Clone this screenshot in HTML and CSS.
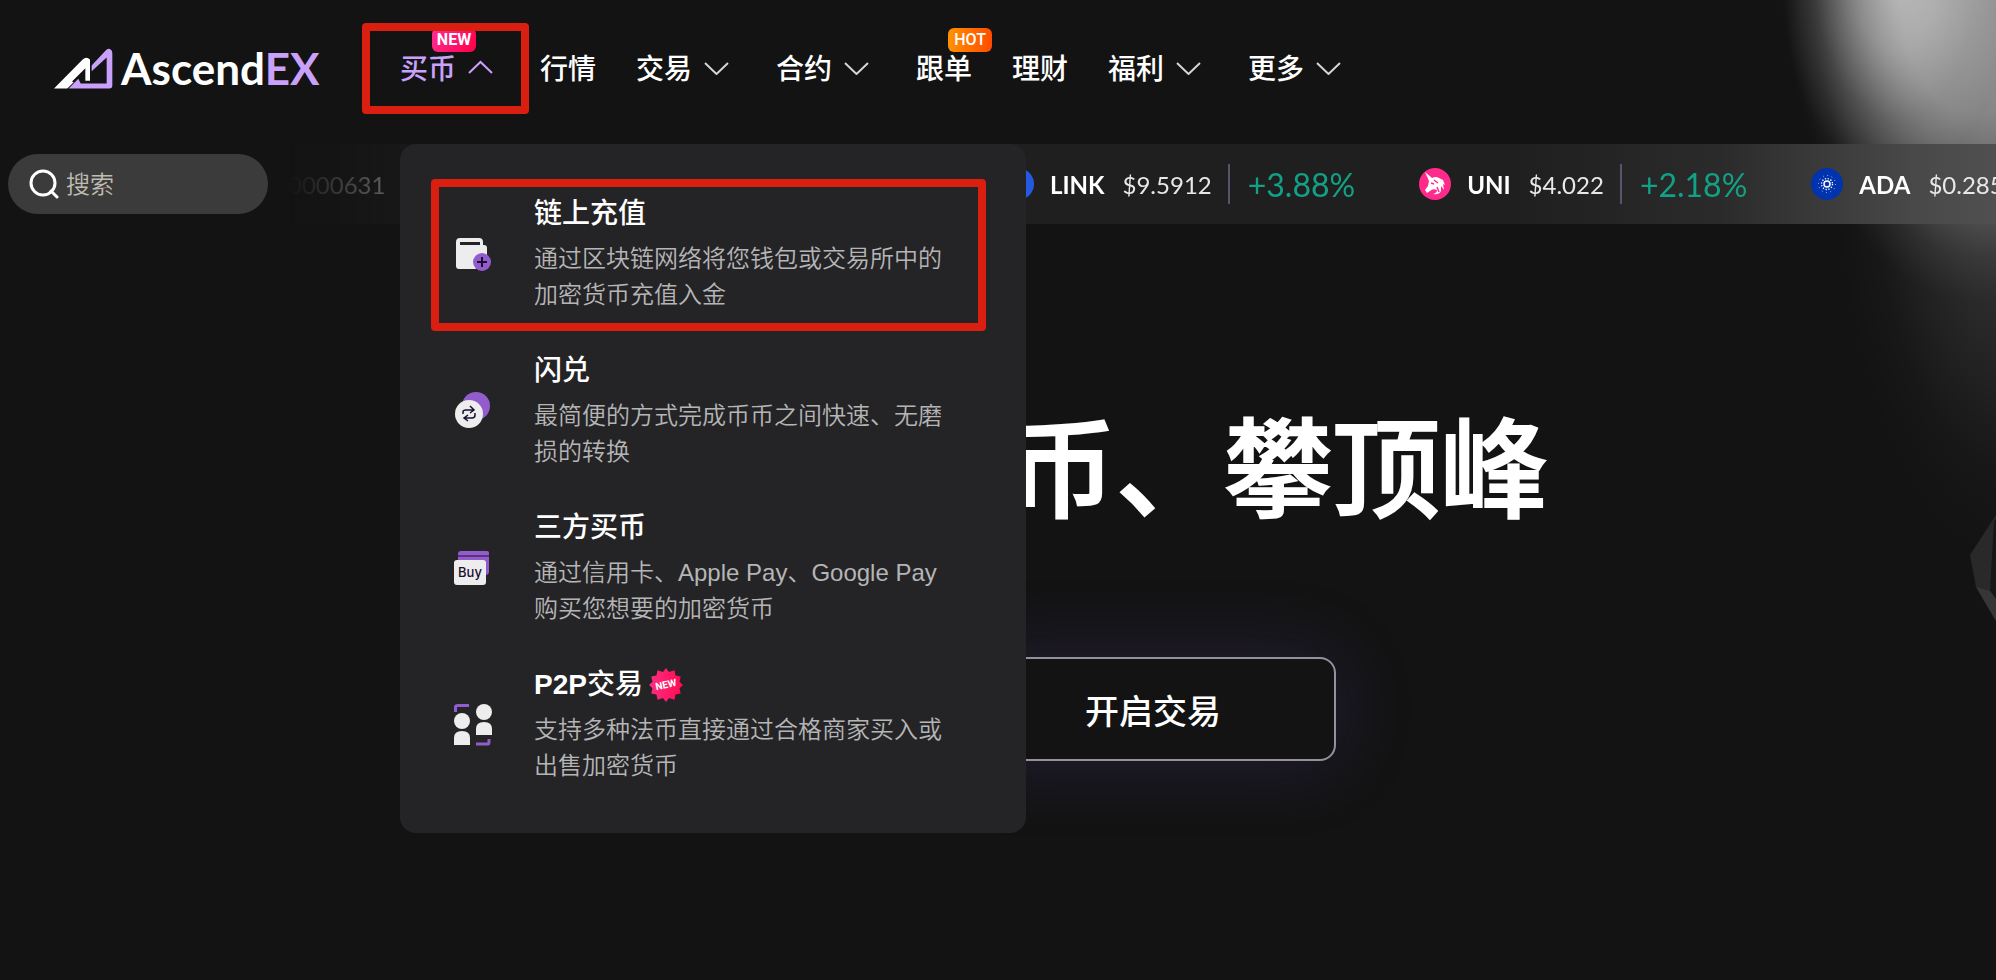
FILE: index.html
```html
<!DOCTYPE html>
<html lang="zh-CN">
    <head>
        <title>AscendEX</title>
        <meta charset="utf-8" />
        <meta name="viewport" content="width=device-width, initial-scale=1">
        <link rel="stylesheet" href="styles.css">
    </head>
    <body>
        <header class="header">
            <a class="logo" href="#">
                <svg class="logo-mark" viewBox="44 52 177 122" aria-hidden="true">
                    <path fill="#fff" d="M44 173 L130 86 Q141 76 152 86 V150 H138 V112 L98 152 L103 154 L84 173 Z"/>
                    <path fill="#c9a0fa" d="M88 173 L117 144 L124 158 H202 V80 L157 121 V104 L199 59 Q206 51 214 56 Q219 59 219 67 V164 Q219 173 210 173 Z"/>
                </svg>
                <span class="logo-text">Ascend<b>EX</b></span>
            </a>
            <nav class="nav">
                <div class="nav-item">
                    <a class="active" href="#">买币<svg class="arrow" viewBox="0 0 32 16"><path d="M1 14 L12.500 3 L24 14"/></svg></a>
                    <span class="tag tag-new">NEW</span>
                    <span class="mark mark-nav"></span>
                    <div class="menu">
                        <a class="menu-item" href="#">
                            <svg class="menu-icon" viewBox="0 0 40 48">
                                <path fill="#ededed" d="M8 8 H27 Q31 8 31 12 V15 H32 Q35 15 35 18 V39 H7 Q4 39 4 36 V12 Q4 8 8 8 Z"/>
                                <rect x="8" y="12" width="20" height="3" fill="#242426"/>
                                <circle cx="30" cy="32" r="9" fill="#935ccc"/>
                                <path d="M30 27 V37 M25 32 H35" stroke="#1a0f30" stroke-width="2"/>
                            </svg>
                            <span class="menu-text">
                                <strong>链上充值</strong>
                                <span>通过区块链网络将您钱包或交易所中的加密货币充值入金</span>
                            </span>
                            <span class="mark mark-menu"></span>
                        </a>
                        <a class="menu-item" href="#">
                            <svg class="menu-icon" viewBox="0 0 40 48">
                                <circle cx="24" cy="19" r="14" fill="#935ccc"/>
                                <circle cx="17" cy="27" r="14" fill="#ededed"/>
                                <path d="M11 27 V25 Q11 23 14 23 H22 M18 19 L22 23 L18 26 M23 26 V28 Q23 31 20 31 H12 M16 28 L12 31 L16 34" fill="none" stroke="#1a0f30" stroke-width="1.500"/>
                            </svg>
                            <span class="menu-text">
                                <strong>闪兑</strong>
                                <span>最简便的方式完成币币之间快速、无磨损的转换</span>
                            </span>
                        </a>
                        <a class="menu-item" href="#">
                            <svg class="menu-icon" viewBox="0 0 40 48">
                                <path fill="#935ccc" d="M9 7 H35 Q37 7 37 9 V28 Q37 31 33 31 H6 V10 Q6 7 9 7 Z"/>
                                <path d="M6 12 H38" stroke="#1a0f30" stroke-width="1"/>
                                <rect x="2" y="16" width="32" height="25" rx="3" fill="#ededed"/>
                                <text class="buy" x="18" y="33">Buy</text>
                            </svg>
                            <span class="menu-text">
                                <strong>三方买币</strong>
                                <span>通过信用卡、Apple Pay、Google Pay购买您想要的加密货币</span>
                            </span>
                        </a>
                        <a class="menu-item" href="#">
                            <svg class="menu-icon" viewBox="0 0 40 48">
                                <path d="M3.500 11 V6 Q3.500 4.500 6 4.500 H17 M24 43 H36 Q37 43 37 41 V38" fill="none" stroke="#935ccc" stroke-width="3"/>
                                <circle cx="10" cy="20" r="8" fill="#ededed"/>
                                <path fill="#ededed" d="M2 44 V37 Q2 30 10 30 Q18 30 18 37 V44 Z"/>
                                <circle cx="32" cy="11" r="8" fill="#ededed"/>
                                <path fill="#ededed" d="M24 34 V28 Q24 21 32 21 Q40 21 40 28 V34 Z"/>
                            </svg>
                            <span class="menu-text">
                                <strong>
                                    <span><b>P2P</b>交易</span>
                                    <svg class="burst" viewBox="0 0 34 34">
                                        <defs><linearGradient id="pink"><stop offset="0" stop-color="#ff2e83"/><stop offset="1" stop-color="#ff0a52"/></linearGradient></defs>
                                        <path fill="url(#pink)" d="M17 0 L20 4 L25.500 2.300 L26.500 7.500 L31.700 8.500 L30.500 13.800 L34 17 L30.500 20.200 L31.700 25.500 L26.500 26.500 L25.500 31.700 L20 30 L17 34 L14 30 L8.500 31.700 L7.500 26.500 L2.300 25.500 L3.500 20.200 L0 17 L3.500 13.800 L2.300 8.500 L7.500 7.500 L8.500 2.300 L14 4 Z"/>
                                        <text x="17" y="20" transform="rotate(-12 17 17)">NEW</text>
                                    </svg>
                                </strong>
                                <span>支持多种法币直接通过合格商家买入或出售加密货币</span>
                            </span>
                        </a>
                    </div>
                </div>
                <div class="nav-item"><a href="#">行情</a></div>
                <div class="nav-item"><a href="#">交易<svg class="arrow" viewBox="0 0 32 16"><path d="M1 4 L12.500 15 L24 4"/></svg></a></div>
                <div class="nav-item"><a href="#">合约<svg class="arrow" viewBox="0 0 32 16"><path d="M1 4 L12.500 15 L24 4"/></svg></a></div>
                <div class="nav-item"><a href="#">跟单</a><span class="tag tag-hot">HOT</span></div>
                <div class="nav-item"><a href="#">理财</a></div>
                <div class="nav-item"><a href="#">福利<svg class="arrow" viewBox="0 0 32 16"><path d="M1 4 L12.500 15 L24 4"/></svg></a></div>
                <div class="nav-item"><a href="#">更多<svg class="arrow" viewBox="0 0 32 16"><path d="M1 4 L12.500 15 L24 4"/></svg></a></div>
            </nav>
        </header>

        <section class="bar">
            <label class="search">
                <svg viewBox="0 0 30 30" aria-hidden="true"><circle cx="14" cy="14" r="12"/><path d="M22 22 L28 28"/></svg>
                <input type="text" placeholder="搜索" aria-label="搜索">
            </label>
            <div class="ticker">
                <div class="quote quote-first"><span class="price">0000631</span><i></i></div>
                <div class="quote">
                    <svg class="coin" viewBox="0 0 32 32"><circle cx="16" cy="16" r="16" fill="#2559e0"/><path d="M14 8 L21 12 V20 L14 24 L7 20 V12 Z" fill="none" stroke="#fff" stroke-width="3"/></svg>
                    <b>LINK</b><span class="price">$9.5912</span><i></i><span class="change">+3.88%</span>
                </div>
                <div class="quote">
                    <svg class="coin" viewBox="0 0 32 32">
                        <circle cx="16" cy="16" r="16" fill="#ff2a8b"/>
                        <path fill="#fff" d="M6 4 L13 10 Q17 8 20 10 L24 12 L26 17 L24 16 L25 22 L22 18 L22 23 Q20 27 14 26 Q18 25 18 22 Q14 20 11 23 L8 25 L6 22 L9 18 L10 13 Z"/>
                        <path d="M12 15 L15 16 M15 12 L19 15 M18 19 L20 24" stroke="#ff2a8b" stroke-width="1.500"/>
                    </svg>
                    <b>UNI</b><span class="price">$4.022</span><i></i><span class="change">+2.18%</span>
                </div>
                <div class="quote">
                    <svg class="coin" viewBox="0 0 32 32">
                        <circle cx="16" cy="16" r="16" fill="#0033ad"/>
                        <g fill="none" stroke="#fff">
                            <circle cx="16" cy="16" r="3" stroke-width="1.500"/>
                            <circle cx="16" cy="16" r="5.500" stroke-width="1.300" stroke-dasharray="1.300 1.580"/>
                            <circle cx="16" cy="16" r="8.500" stroke-width="1" stroke-dasharray="1 3.450" opacity=".7"/>
                        </g>
                    </svg>
                    <b>ADA</b><span class="price">$0.285</span>
                </div>
            </div>
        </section>

        <main class="hero">
            <h1>币、攀顶峰</h1>
            <div class="actions"><button type="button">开启交易</button></div>
        </main>

        <svg class="crystal" viewBox="0 0 26 106" aria-hidden="true">
            <path fill="#292929" d="M26 0 L0 40 L6 72 L26 106 Z"/>
            <path fill="#171717" d="M24 6 L20 76 L26 84 V4 Z"/>
            <path fill="#363636" d="M6 72 L20 76 L26 84 V106 Z"/>
        </svg>
    </body>
</html>
```

FILE: styles.css
```css
* { box-sizing: border-box; }
body {
    margin: 0;
    min-height: 100vh;
    position: relative;
    overflow: hidden;
    color: white;
    font-family: Inter, "Noto Sans CJK SC", sans-serif;
    background-color: #131313;
    /* spotlight in the top right corner */
    background-image:
        radial-gradient(115px 200px at calc(100% - 100px) -20px, rgba(255,255,255,.5), rgba(255,255,255,.36) 35%, rgba(255,255,255,.12) 70%, transparent),
        radial-gradient(190px 310px at calc(100% - 20px) -10px, rgba(255,255,255,.46), rgba(255,255,255,.38) 40%, rgba(255,255,255,.2) 64%, rgba(255,255,255,.05) 86%, transparent),
        radial-gradient(180px 460px at calc(100% + 14px) 100px, rgba(255,255,255,.2), rgba(255,255,255,.09) 50%, rgba(255,255,255,.02) 80%, transparent);
    background-repeat: no-repeat;
}
a { text-decoration: none; color: inherit; }

/* header */
.header {
    display: flex;
    height: 144px;
    padding-left: 54px;
}
.logo {
    display: flex;
    flex: none;
    align-items: center;
    width: 346px;
    height: 136px;
    gap: 8px;
}
.logo-mark { width: 59px; height: 41px; }
.logo-text {
    font-family: Lato, sans-serif;
    font-size: 44px;
    font-weight: 700;
    line-height: 48px;
}
.logo-text b { font-weight: inherit; color: #c9a0fa; }
.nav {
    display: flex;
    gap: 40px;
}
.nav-item {
    position: relative;
    height: 144px;
}
.nav-item > a {
    display: flex;
    align-items: center;
    height: 134px;
    font-size: 28px;
    font-weight: 500;
    white-space: nowrap;
}
.nav-item > a.active { color: #c9a0fa; }
.arrow {
    width: 32px;
    height: 16px;
    margin-left: 12px;
    fill: none;
    stroke: #d5d5d8;
    stroke-width: 2;
}
.active .arrow { stroke: #c9a0fa; }
.tag {
    position: absolute;
    top: 28px;
    left: 32px;
    width: 44px;
    height: 24px;
    border-radius: 6px;
    font: 500 16px/24px Roboto, sans-serif;
    text-align: center;
}
.tag-new { background: linear-gradient(120deg, #ff2e93, #ff0048); font-weight: 700; }
.tag-hot { background: linear-gradient(90deg, #ff9200, #ff4b00); }

/* red outlines */
.mark {
    position: absolute;
    border: 8px solid #da1e0f;
    border-radius: 4px;
}
.mark-nav { top: 23px; left: -38px; width: 167px; height: 91px; }
.mark-menu { top: -15px; left: -17px; right: -8px; height: 152px; }

/* dropdown */
.menu {
    position: absolute;
    z-index: 2;
    top: 144px;
    left: 0;
    display: flex;
    flex-direction: column;
    gap: 38px;
    width: 626px;
    padding: 50px 48px 49px;
    border-radius: 16px;
    background: #242426;
}
.menu-item {
    position: relative;
    display: flex;
    align-items: center;
    gap: 42px;
    padding: 0 32px 0 4px;
}
.menu-icon {
    flex: none;
    width: 40px;
    height: 48px;
}
.buy { font: 500 13px Inter, sans-serif; text-anchor: middle; fill: #1a0f30; }
.menu-text {
    display: flex;
    flex-direction: column;
    gap: 7px;
    color: #b5b5b6;
    font-family: "Liberation Sans", "Noto Sans CJK SC", sans-serif;
    font-size: 24px;
    font-weight: 350;
    line-height: 36px;
}
.menu-text strong {
    display: flex;
    align-items: center;
    gap: 6px;
    color: white;
    font-size: 28px;
    font-weight: 500;
    line-height: 40px;
}
.burst { width: 34px; height: 34px; }
.burst text { font: 700 10px Roboto, sans-serif; text-anchor: middle; fill: white; }

/* search and prices */
.bar {
    display: flex;
    align-items: center;
    height: 80px;
    padding-left: 8px;
    gap: 20px;
}
.search {
    display: flex;
    flex: none;
    align-items: center;
    gap: 7px;
    width: 260px;
    height: 60px;
    padding: 0 21px;
    border-radius: 30px;
    background: #3b3b3b;
}
.search svg {
    flex: none;
    width: 30px;
    height: 30px;
    fill: none;
    stroke: white;
    stroke-width: 3;
    stroke-linecap: round;
}
.search input {
    width: 100%;
    padding: 0;
    border: 0;
    outline: 0;
    background: none;
    color: white;
    font: 350 24px Inter, "Noto Sans CJK SC", sans-serif;
}
.search input::placeholder { color: #c0bcb2; opacity: 1; }
.ticker {
    display: flex;
    flex: 1;
    align-items: center;
    gap: 64px;
    min-width: 0;
    height: 80px;
    overflow: hidden;
    background: linear-gradient(90deg, #1f1f1f 72%, #2b2b2b 84%, #484848 95%, #505050);
    -webkit-mask-image: linear-gradient(90deg, transparent, black 280px);
    mask-image: linear-gradient(90deg, transparent, black 280px);
    font-family: Lato, sans-serif;
    font-size: 24px;
}
.quote {
    display: flex;
    flex: none;
    align-items: center;
}
.quote-first { width: 650px; }
.coin { width: 32px; height: 32px; margin-right: 16px; }
.quote b { margin-right: 18px; }
.quote i {
    width: 2px;
    height: 40px;
    margin: 0 18px 0 16px;
    background: #55556b;
}
.price { color: #e8e8e8; }
.change { color: #12a184; font-size: 32px; }

/* hero */
.hero { padding-top: 166px; }
h1 {
    max-width: 1100px;
    margin: 0 auto;
    font-size: 108px;
    font-weight: 500;
    line-height: 160px;
    text-align: right;
    -webkit-text-stroke: 2px white;
}
.actions {
    display: flex;
    justify-content: flex-end;
    max-width: 676px;
    margin: 107px auto 0;
}
button {
    width: 366px;
    height: 104px;
    border: 2px solid #95909a;
    border-radius: 16px;
    background: #131313;
    box-shadow: 0 0 80px rgba(110,80,200,.2);
    color: white;
    font: 500 34px Inter, "Noto Sans CJK SC", sans-serif;
}
.crystal {
    position: absolute;
    top: 515px;
    right: 0;
    width: 26px;
    height: 106px;
}
```
